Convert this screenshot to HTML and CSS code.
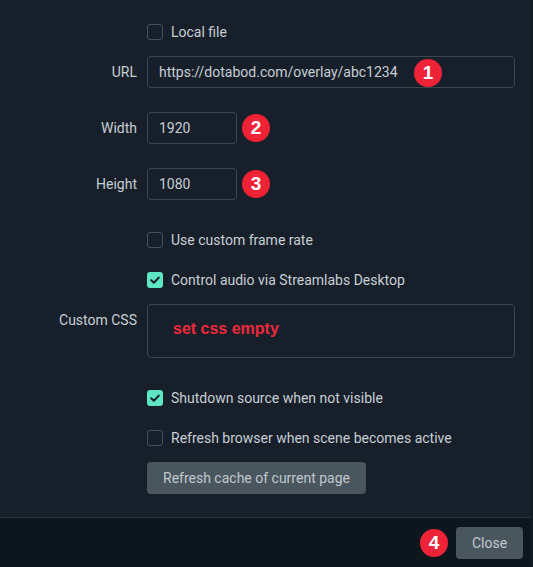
FILE: index.html
```html
<!DOCTYPE html>
<html>
<head>
<meta charset="utf-8">
<link rel="stylesheet" href="styles.css">
</head>
<body>
<div class="window">
  <div class="content">
    <div class="row row-check">
      <div class="label"></div>
      <label class="check"><span class="box"></span><span>Local file</span></label>
    </div>
    <div class="row row-gap12">
      <div class="label">URL</div>
      <div class="field wide">
        <div class="input">https://dotabod.com/overlay/abc1234</div>
        <span class="badge badge-over">1</span>
      </div>
    </div>
    <div class="row row-gap24">
      <div class="label">Width</div>
      <div class="field"><div class="input small">1920</div><span class="badge">2</span></div>
    </div>
    <div class="row row-gap24">
      <div class="label">Height</div>
      <div class="field"><div class="input small">1080</div><span class="badge">3</span></div>
    </div>
    <div class="row row-check row-gap28">
      <div class="label"></div>
      <label class="check"><span class="box"></span><span>Use custom frame rate</span></label>
    </div>
    <div class="row row-check row-gap16">
      <div class="label"></div>
      <label class="check"><span class="box checked"><svg viewBox="0 0 16 16" width="16" height="16"><path d="M4.2 8.2 L6.9 10.8 L11.8 5.6" fill="none" stroke="#16202a" stroke-width="2" stroke-linecap="round" stroke-linejoin="round"/></svg></span><span>Control audio via Streamlabs Desktop</span></label>
    </div>
    <div class="row row-gap12 row-top">
      <div class="label">Custom CSS</div>
      <div class="textarea">set css empty</div>
    </div>
    <div class="row row-check row-gap28">
      <div class="label"></div>
      <label class="check"><span class="box checked"><svg viewBox="0 0 16 16" width="16" height="16"><path d="M4.2 8.2 L6.9 10.8 L11.8 5.6" fill="none" stroke="#16202a" stroke-width="2" stroke-linecap="round" stroke-linejoin="round"/></svg></span><span>Shutdown source when not visible</span></label>
    </div>
    <div class="row row-check row-gap16">
      <div class="label"></div>
      <label class="check"><span class="box"></span><span>Refresh browser when scene becomes active</span></label>
    </div>
    <div class="row row-gap12">
      <div class="label"></div>
      <div><button class="btn">Refresh cache of current page</button></div>
    </div>
  </div>
  <div class="footer">
    <span class="badge">4</span>
    <button class="btn close">Close</button>
  </div>
</div>
</body>
</html>
```

FILE: styles.css
```css
html, body {
  margin: 0;
  padding: 0;
  background: #17202a;
}
body {
  font-family: Roboto, "Liberation Sans", sans-serif;
  font-size: 14px;
  color: #c7ced4;
}
.window {
  width: 531px;
  height: 567px;
  border-right: 2px solid #121a21;
  display: flex;
  flex-direction: column;
}
.content {
  flex: 1;
  padding-top: 20px;
}
.row {
  display: grid;
  grid-template-columns: 137px 1fr;
  column-gap: 10px;
  align-items: center;
  padding-right: 16px;
}
.row-top { align-items: start; }
.row-check { height: 24px; }
.row-gap12 { margin-top: 12px; }
.row-gap16 { margin-top: 16px; }
.row-gap24 { margin-top: 24px; }
.row-gap28 { margin-top: 28px; }
.label {
  text-align: right;
  line-height: 32px;
  color: #c7ced4;
}
.check {
  display: flex;
  align-items: center;
  gap: 8px;
  color: #c7ced4;
}
.box {
  width: 16px;
  height: 16px;
  box-sizing: border-box;
  border: 1px solid #46515b;
  border-radius: 3px;
  display: flex;
}
.box.checked {
  border: none;
  background: #5ee6c3;
}
.field {
  display: flex;
  align-items: center;
  gap: 5px;
  position: relative;
}
.field.wide .input { flex: 1; }
.input {
  height: 32px;
  box-sizing: border-box;
  border: 1px solid #3b4650;
  border-radius: 4px;
  padding: 0 11px;
  line-height: 30px;
  color: #c7ced4;
}
.input.small { width: 90px; }
.badge {
  width: 28px;
  height: 28px;
  border-radius: 50%;
  background: #ef2337;
  color: #fff;
  font-family: "Liberation Sans", Arial, sans-serif;
  font-weight: 700;
  font-size: 19px;
  display: flex;
  align-items: center;
  justify-content: center;
  flex: none;
}
.badge-over {
  position: absolute;
  left: 267px;
  top: 3px;
}
.textarea {
  height: 54px;
  box-sizing: border-box;
  border: 1px solid #3b4650;
  border-radius: 4px;
  padding: 14px 25px;
  line-height: 20px;
  font-family: "Liberation Sans", Arial, sans-serif;
  font-size: 16px;
  font-weight: 700;
  color: #f0283c;
}
.btn {
  font-family: Roboto, "Liberation Sans", sans-serif;
  font-size: 14px;
  height: 32px;
  border: none;
  border-radius: 4px;
  background: #4a565e;
  color: #c0c8ce;
  padding: 0 16px;
}
.footer {
  height: 49px;
  border-top: 1px solid #28323b;
  background: #0d161c;
  display: flex;
  align-items: center;
  justify-content: flex-end;
  gap: 8px;
  padding-right: 8px;
}
.close {
  width: 67px;
  padding: 0;
}
```
